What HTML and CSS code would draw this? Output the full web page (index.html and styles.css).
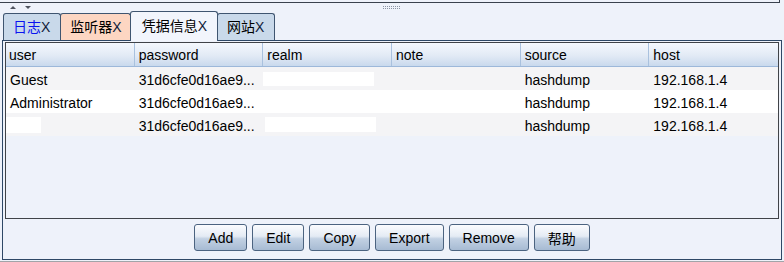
FILE: index.html
```html
<!DOCTYPE html>
<html>
<head>
	<title>凭据信息</title>
	<link rel="stylesheet" href="styles.css">
</head>
<body>
	<div class="top-edge"></div>
	<div class="split-bar">
		<span class="arrow up"></span>
		<span class="arrow down"></span>
		<span class="grip"></span>
	</div>
	<div class="tabs">
		<div class="tab blue first-tab"><span class="blue-text">日志</span><span class="close">X</span></div>
		<div class="tab salmon">监听器<span class="close">X</span></div>
		<div class="tab selected">凭据信息<span class="close">X</span></div>
		<div class="tab blue last-tab">网站<span class="close">X</span></div>
	</div>
	<div class="panel">
		<div class="grid-box">
			<div class="row head">
				<div>user</div>
				<div>password</div>
				<div>realm</div>
				<div>note</div>
				<div>source</div>
				<div>host</div>
			</div>
			<div class="row odd">
				<div>Guest</div>
				<div>31d6cfe0d16ae9...</div>
				<div><span class="hidden first"></span></div>
				<div></div>
				<div>hashdump</div>
				<div>192.168.1.4</div>
			</div>
			<div class="row">
				<div>Administrator</div>
				<div>31d6cfe0d16ae9...</div>
				<div></div>
				<div></div>
				<div>hashdump</div>
				<div>192.168.1.4</div>
			</div>
			<div class="row odd">
				<div class="redacted-user"><span class="hidden user"></span></div>
				<div>31d6cfe0d16ae9...</div>
				<div><span class="hidden third"></span></div>
				<div></div>
				<div>hashdump</div>
				<div>192.168.1.4</div>
			</div>
		</div>
		<div class="buttons">
			<button>Add</button>
			<button>Edit</button>
			<button>Copy</button>
			<button>Export</button>
			<button>Remove</button>
			<button>帮助</button>
		</div>
	</div>
	<div class="bottom-edge"></div>
</body>
</html>
```

FILE: styles.css
```css
:root {
	--bg: #eef2fa;
	--frame: #2e4866;
	--tab-border: #3f5570;
}
body {
	margin: 0;
	width: 784px;
	height: 262px;
	overflow: hidden;
	background-color: var(--bg);
	font-family: 'Liberation Sans', 'Noto Sans CJK SC', Arial, sans-serif;
	font-size: 14px;
	color: black;
}
.top-edge {
	width: 779px;
	height: 2px;
	border-bottom: 1px solid #3a424e;
	border-right: 1px solid #3a424e;
}
.split-bar {
	height: 9px;
	display: flex;
	align-items: center;
	padding-left: 10px;
}
.arrow {
	width: 0;
	height: 0;
	border-left: 3px solid transparent;
	border-right: 3px solid transparent;
}
.arrow.up {
	border-bottom: 3px solid #505560;
}
.arrow.down {
	border-top: 3px solid #505560;
	margin-left: 9px;
}
.grip {
	width: 17px;
	height: 3px;
	margin-left: 352px;
	border-top: 1px dotted #8a94a4;
	border-bottom: 1px dotted #8a94a4;
	box-sizing: border-box;
}
.tabs {
	display: flex;
	align-items: flex-end;
	height: 28px;
	padding-left: 3px;
	position: relative;
	z-index: 1;
}
.tab {
	height: 26px;
	line-height: 27px;
	padding: 0 8px 0 9px;
	border: 1px solid var(--tab-border);
	border-bottom: none;
	border-radius: 3px 3px 0 0;
	margin-right: -1px;
	white-space: nowrap;
}
.tab.first-tab {
	padding-right: 10px;
}
.tab.last-tab {
	padding-right: 10px;
}
.tab.blue {
	background-color: #c9d9ea;
}
.tab.salmon {
	background-color: #fdd6c2;
}
.tab.selected {
	background-color: #f2f5fc;
	height: 29px;
	line-height: 29px;
	padding: 0 10px 0 11px;
	margin-bottom: -1px;
}
.blue-text {
	color: #0a14f0;
}
.close {
	color: #101c3a;
}
.panel {
	margin: 0 2px;
	height: 217px;
	border: 1px solid var(--frame);
	padding: 1px 2px 0 2px;
	display: flex;
	flex-direction: column;
}
.grid-box {
	height: 175px;
	border: 1px solid #404348;
}
.row {
	display: grid;
	grid-template-columns: repeat(6, 1fr);
	height: 23px;
	background-color: white;
}
.row div {
	height: 23px;
	box-sizing: border-box;
	padding: 3px 0 0 4px;
	line-height: 20px;
	white-space: nowrap;
	overflow: hidden;
}
.row.head {
	height: 24px;
	background: linear-gradient(#f5f8fd, #e2eaf5 55%, #c9d9ed);
	border-bottom: 1px solid #9db8da;
	box-sizing: border-box;
}
.row.head div {
	border-right: 1px solid #a9c1de;
	padding-top: 2px;
}
.row.head div:first-child {
	padding-left: 3px;
}
.row.head div:last-child {
	border-right: none;
}
.row.odd {
	background-color: #f4f4f6;
}
.hidden {
	display: inline-block;
	background-color: white;
	vertical-align: top;
}
.hidden.first {
	width: 113px;
	height: 14px;
	margin-left: -6px;
	margin-top: 2px;
}
.hidden.third {
	width: 111px;
	height: 15px;
	margin-left: -2px;
	margin-top: 1px;
}
.row .redacted-user {
	padding-left: 0;
}
.hidden.user {
	width: 35px;
	height: 16px;
	margin-top: 1px;
}
.buttons {
	flex: 1;
	display: flex;
	justify-content: center;
	gap: 5px;
	padding-top: 5px;
}
.buttons button {
	height: 27px;
	padding: 0 13px;
	font-family: inherit;
	font-size: 14px;
	color: black;
	border: 1px solid #4b6380;
	border-radius: 3px;
	background: linear-gradient(#fbfcfe, #e4ebf4 45%, #c2d1e3 55%, #a7bbd3);
	cursor: pointer;
}
.bottom-edge {
	margin-top: 1px;
	height: 2px;
	background-color: #a2a4a8;
}
```
